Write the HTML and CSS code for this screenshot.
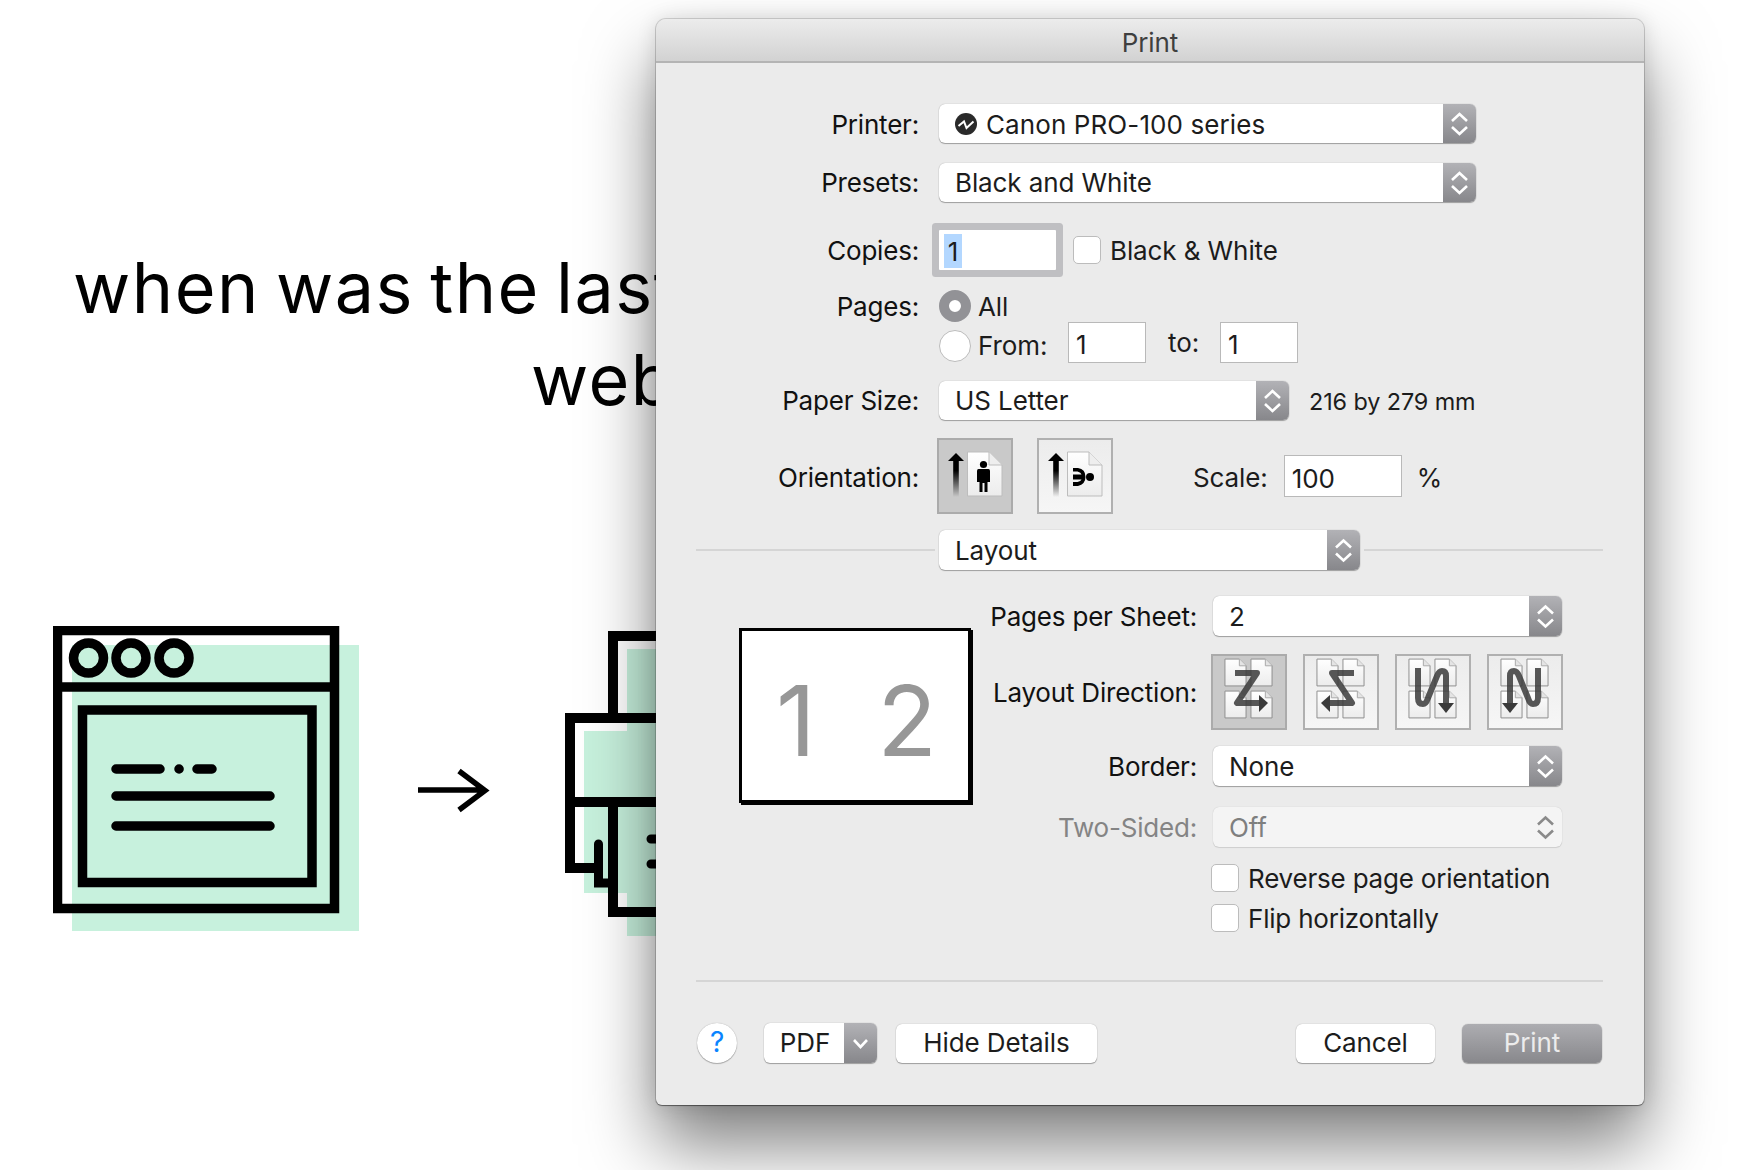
FILE: index.html
```html
<!DOCTYPE html>
<html lang="en">
<head>
    <meta charset="UTF-8">
    <title>Print</title>
    <link rel="stylesheet" href="styles.css">
</head>
<body>

<svg class="defs" width="0" height="0">
    <defs>
        <linearGradient id="pageFill" x1="0" y1="0" x2="0" y2="1">
            <stop offset="0" stop-color="#fff"/>
            <stop offset="1" stop-color="#ececec"/>
        </linearGradient>
        <linearGradient id="tailFade" x1="0" y1="0" x2="0" y2="1">
            <stop offset="0" stop-color="#000"/>
            <stop offset="0.4" stop-color="#000"/>
            <stop offset="1" stop-color="#000" stop-opacity="0"/>
        </linearGradient>
        <symbol id="stepper" viewBox="0 0 33 39">
            <path d="M9 17 L16.5 10 L24 17 M9 23 L16.5 30 L24 23" fill="none" stroke="currentColor" stroke-width="2.6"/>
        </symbol>
        <symbol id="sheet" viewBox="0 0 24 30">
            <path d="M1 1 H16 L23 8 V29 H1 Z" fill="url(#pageFill)" stroke="#8c8c8c" stroke-width="1"/>
            <path d="M16 1 V8 H23" fill="#e4e4e4" stroke="#a8a8a8" stroke-width="1"/>
        </symbol>
        <symbol id="orientPage" viewBox="0 0 76 76">
            <path d="M30.500 14 H52 L65 27 V58 H30.500 Z" fill="url(#pageFill)" stroke="#bdbdbd" stroke-width="1"/>
            <path d="M52 14 V27 H65" fill="#eee" stroke="#bdbdbd" stroke-width="1"/>
            <path d="M11 23 L19 15 L27 23 H21.800 V59 H16.200 V23 Z" fill="url(#tailFade)"/>
        </symbol>
        <symbol id="fourSheets" viewBox="0 0 76 76">
            <use href="#sheet" x="13" y="4" width="23" height="29"/>
            <use href="#sheet" x="39" y="4" width="23" height="29"/>
            <use href="#sheet" x="13" y="36" width="23" height="29"/>
            <use href="#sheet" x="39" y="36" width="23" height="29"/>
        </symbol>
    </defs>
</svg>

<div id="page">
    <h1 class="headline">
        <span class="headline-one">when was the last</span>
        <span class="headline-two">web</span>
    </h1>

    <div class="art">
        <svg class="art-browser" viewBox="53 626 306 305">
            <rect x="72" y="645" width="287" height="286" fill="#c7f1dd"/>
            <g fill="none" stroke="#000" stroke-width="9.5">
                <rect x="57.5" y="630.5" width="277" height="278"/>
                <path d="M53 687 H339"/>
                <rect x="82.5" y="710" width="229.5" height="172.5"/>
                <circle cx="88.5" cy="658" r="15"/>
                <circle cx="131" cy="658" r="15"/>
                <circle cx="174" cy="658" r="15"/>
                <path stroke-linecap="round" d="M116 769 H160 M179 769 h.1 M197 769 H212 M116 796 H270 M116 826 H270"/>
            </g>
        </svg>
        <svg class="art-arrow" viewBox="418 765 72 50">
            <path d="M418 790 H485 M459 771 L485 790.500 L459 810" fill="none" stroke="#000" stroke-width="5.500"/>
        </svg>
        <svg class="art-printer" viewBox="565 631 135 305">
            <rect x="627" y="649" width="73" height="287" fill="#c7f1dd"/>
            <rect x="584" y="731" width="116" height="162" fill="#c7f1dd"/>
            <g fill="none" stroke="#000" stroke-width="10">
                <path d="M613 713 V636 H700"/>
                <path d="M594 868 H570 V718 H700"/>
                <path d="M565 802 H700"/>
                <path d="M613 807 V912 H700"/>
                <path d="M598.500 844 V883 H608" stroke-width="9" stroke-linecap="round"/>
                <path d="M651 839 H662 M651 864 H662" stroke-width="9" stroke-linecap="round"/>
            </g>
        </svg>
    </div>
</div>

<div class="dialog">
    <div class="titlebar">Print</div>

    <div class="row row-printer">
        <span class="label">Printer:</span>
        <div class="select select-wide">
            <svg class="printer-badge" viewBox="0 0 22 22">
                <circle cx="11" cy="11" r="11" fill="#2a2a2a"/>
                <path d="M3.500 13 L9 8.500 L11.500 15 L18.500 8.500" fill="none" stroke="#fff" stroke-width="2"/>
            </svg>
            <span class="select-text select-text-badge">Canon PRO-100 series</span>
            <span class="stepper"><svg><use href="#stepper"/></svg></span>
        </div>
    </div>

    <div class="row row-presets">
        <span class="label">Presets:</span>
        <div class="select select-wide">
            <span class="select-text">Black and White</span>
            <span class="stepper"><svg><use href="#stepper"/></svg></span>
        </div>
    </div>

    <div class="row row-copies">
        <span class="label">Copies:</span>
        <div class="field field-copies"><span class="selected-text">1</span></div>
        <span class="checkbox checkbox-copies"></span>
        <span class="check-text">Black &amp; White</span>
    </div>

    <div class="row row-pages">
        <span class="label">Pages:</span>
        <span class="radio radio-on"></span>
        <span class="radio-text">All</span>
    </div>

    <div class="row row-from">
        <span class="label"></span>
        <span class="radio radio-from"></span>
        <span class="radio-text radio-text-from">From:</span>
        <div class="field field-page">1</div>
        <span class="to-text">to:</span>
        <div class="field field-page">1</div>
    </div>

    <div class="row row-paper">
        <span class="label">Paper Size:</span>
        <div class="select select-paper">
            <span class="select-text">US Letter</span>
            <span class="stepper"><svg><use href="#stepper"/></svg></span>
        </div>
        <span class="paper-dims">216 by 279 mm</span>
    </div>

    <div class="row row-orient">
        <span class="label">Orientation:</span>
        <div class="tile tile-on">
            <svg class="tile-art" viewBox="0 0 76 76">
                <use href="#orientPage" width="76" height="76"/>
                <circle cx="46.500" cy="26.500" r="3.600"/>
                <path d="M41.500 31 H51.500 Q53 31 53 33 V44 H50.500 V54 H47.500 V45 H45.500 V54 H42.500 V44 H40 V33 Q40 31 41.500 31 Z"/>
            </svg>
        </div>
        <div class="tile tile-second">
            <svg class="tile-art" viewBox="0 0 76 76">
                <use href="#orientPage" width="76" height="76"/>
                <circle cx="53" cy="39" r="4"/>
                <path d="M36 30 H41 Q48.500 31 48.500 39 Q48.500 46 41 48 H36 V44 H40.500 Q44 43 44.500 41.500 H36 V36.500 H44.500 Q44 34.500 40.500 33.500 H36 Z"/>
            </svg>
        </div>
        <span class="scale-label">Scale:</span>
        <div class="field field-scale">100</div>
        <span class="percent">%</span>
    </div>

    <div class="row row-section">
        <span class="rule rule-left"></span>
        <div class="select select-section">
            <span class="select-text">Layout</span>
            <span class="stepper"><svg><use href="#stepper"/></svg></span>
        </div>
        <span class="rule"></span>
    </div>

    <div class="layout-panel">
        <div class="preview">
            <span class="preview-num">1</span>
            <span class="preview-num">2</span>
        </div>

        <div class="sub-form">
            <div class="sub-row">
                <span class="sub-label">Pages per Sheet:</span>
                <div class="select select-sub">
                    <span class="select-text">2</span>
                    <span class="stepper"><svg><use href="#stepper"/></svg></span>
                </div>
            </div>

            <div class="sub-row sub-row-direction">
                <span class="sub-label">Layout Direction:</span>
                <div class="tile tile-on tile-dir">
                    <svg class="tile-art" viewBox="0 0 76 76">
                        <use href="#fourSheets" width="76" height="76"/>
                        <path class="flow" d="M24 19 H46 L26 49 H49"/>
                        <path class="flow-head" d="M48 41 L57 49 L48 58 Z"/>
                    </svg>
                </div>
                <div class="tile tile-dir">
                    <svg class="tile-art" viewBox="0 0 76 76">
                        <use href="#fourSheets" width="76" height="76"/>
                        <g transform="translate(75 0) scale(-1 1)">
                            <path class="flow" d="M24 19 H46 L26 49 H49"/>
                            <path class="flow-head" d="M48 41 L57 49 L48 58 Z"/>
                        </g>
                    </svg>
                </div>
                <div class="tile tile-dir">
                    <svg class="tile-art" viewBox="0 0 76 76">
                        <use href="#fourSheets" width="76" height="76"/>
                        <path class="flow" d="M23 14 V44 Q23 50 28 50 Q31 50 33 44 L42 22 Q44 17 47 17 Q51 17 51 22 V50"/>
                        <path class="flow-head" d="M43 49 H59 L51 59 Z"/>
                    </svg>
                </div>
                <div class="tile tile-dir">
                    <svg class="tile-art" viewBox="0 0 76 76">
                        <use href="#fourSheets" width="76" height="76"/>
                        <g transform="translate(74 0) scale(-1 1)">
                            <path class="flow" d="M23 14 V44 Q23 50 28 50 Q31 50 33 44 L42 22 Q44 17 47 17 Q51 17 51 22 V50"/>
                            <path class="flow-head" d="M43 49 H59 L51 59 Z"/>
                        </g>
                    </svg>
                </div>
            </div>

            <div class="sub-row sub-row-border">
                <span class="sub-label">Border:</span>
                <div class="select select-sub">
                    <span class="select-text">None</span>
                    <span class="stepper"><svg><use href="#stepper"/></svg></span>
                </div>
            </div>

            <div class="sub-row sub-row-sided">
                <span class="sub-label sub-label-off">Two-Sided:</span>
                <div class="select select-sub select-off">
                    <span class="select-text">Off</span>
                    <span class="stepper"><svg><use href="#stepper"/></svg></span>
                </div>
            </div>

            <div class="sub-row sub-row-reverse">
                <span class="sub-label"></span>
                <span class="checkbox checkbox-sub"></span>
                <span class="check-text">Reverse page orientation</span>
            </div>

            <div class="sub-row sub-row-flip">
                <span class="sub-label"></span>
                <span class="checkbox checkbox-sub"></span>
                <span class="check-text">Flip horizontally</span>
            </div>
        </div>
    </div>

    <div class="rule rule-bottom"></div>

    <div class="footer">
        <span class="help">?</span>
        <div class="pdf">
            <span class="pdf-text">PDF</span>
            <span class="pdf-arrow">
                <svg viewBox="0 0 33 40"><path d="M10 17 L16.500 24 L23 17" fill="none" stroke="#fff" stroke-width="2.600"/></svg>
            </span>
        </div>
        <span class="btn btn-hide">Hide Details</span>
        <span class="btn btn-cancel">Cancel</span>
        <span class="btn btn-print">Print</span>
    </div>
</div>

</body>
</html>
```

FILE: styles.css
```css
body {
    margin: 0;
    background-color: #fff;
    font-family: Inter, "Liberation Sans", sans-serif;
    color: #1c1c1c;
    overflow: hidden;
}
.defs {
    position: absolute;
}
#page {
    height: 1170px;
}

/* page behind the dialog */
.headline {
    margin: 0;
    padding-top: 242px;
    font-family: Inter, sans-serif;
    font-weight: 400;
    font-size: 70px;
    line-height: 92px;
    letter-spacing: 1.500px;
    word-spacing: -5px;
    color: #000;
}
.headline span {
    display: block;
    white-space: nowrap;
}
.headline-one {
    padding-left: 73px;
}
.headline-two {
    padding-left: 531px;
}
.art {
    display: flex;
    align-items: flex-start;
    padding-left: 53px;
    margin-top: 200px;
}
.art-browser {
    width: 306px;
    height: 305px;
    flex-shrink: 0;
}
.art-arrow {
    width: 72px;
    height: 50px;
    margin: 139px 0 0 59px;
    flex-shrink: 0;
}
.art-printer {
    width: 135px;
    height: 305px;
    margin: 5px 0 0 75px;
    flex-shrink: 0;
}

/* the print window */
.dialog {
    position: absolute;
    left: 656px;
    top: 19px;
    width: 988px;
    padding-bottom: 42px;
    box-sizing: border-box;
    background-color: #ebebeb;
    border-radius: 10px 10px 6px 6px;
    box-shadow: 0 0 0 1px rgba(0, 0, 0, 0.14), 0 1px 1px rgba(0, 0, 0, 0.4), 0 0 20px rgba(0, 0, 0, 0.12), 0 40px 70px rgba(0, 0, 0, 0.5);
    font-size: 26px;
    letter-spacing: -0.100px;
}
.titlebar {
    height: 44px;
    box-sizing: border-box;
    border-bottom: 2px solid #b4b4b4;
    border-radius: 10px 10px 0 0;
    background: linear-gradient(#ececec, #d2d2d2);
    text-align: center;
    line-height: 47px;
    color: #3f3f3f;
}

.row {
    display: flex;
    align-items: center;
}
.label {
    width: 263px;
    margin-right: 20px;
    padding-top: 1px;
    text-align: right;
    letter-spacing: -0.200px;
    color: #111;
    flex-shrink: 0;
}
.row-printer { margin-top: 41px; height: 39px; }
.row-presets { margin-top: 20px; height: 39px; }
.row-presets .label, .row-presets .select-text { padding-top: 0; }
.row-copies { margin-top: 28px; height: 40px; }
.row-pages { margin-top: 20px; height: 32px; }
.row-from { height: 41px; }
.row-paper { margin-top: 17px; height: 40px; }
.row-orient { margin-top: 18px; height: 76px; }
.row-orient .label, .scale-label, .percent { padding-top: 3px; }
.row-orient .label { margin-right: 18px; }
.row-section { margin-top: 16px; height: 40px; padding: 0 41px 0 40px; }

/* popup buttons */
.select {
    display: flex;
    align-items: center;
    height: 39px;
    box-sizing: border-box;
    background-color: #fff;
    border-radius: 6px;
    box-shadow: 0 0 1px rgba(0, 0, 0, 0.35), 0 1px 1px rgba(0, 0, 0, 0.3);
    position: relative;
    overflow: hidden;
}
.select-wide { width: 537px; }
.select-paper { width: 350px; }
.select-section { width: 421px; flex-shrink: 0; margin: 0 4px; height: 40px; }
.select-sub { width: 349px; height: 40px; }
.select-text {
    padding: 1px 0 0 16px;
    flex: 1;
    white-space: nowrap;
}
.printer-badge {
    width: 22px;
    height: 22px;
    margin-left: 16px;
    flex-shrink: 0;
}
.select-text-badge {
    padding-left: 9px;
    letter-spacing: 0.100px;
}
.stepper {
    width: 33px;
    height: 100%;
    flex-shrink: 0;
    color: #fff;
    background: linear-gradient(#b2b2b6, #87878b);
}
.stepper svg {
    display: block;
    width: 33px;
    height: 100%;
}
.select-off {
    background-color: #f4f4f4;
    box-shadow: 0 0 1px rgba(0, 0, 0, 0.2), 0 1px 1px rgba(0, 0, 0, 0.1);
    color: #7f7f7f;
}
.select-off .stepper {
    background: none;
    color: #8a8a8a;
}

/* text fields */
.field {
    height: 41px;
    box-sizing: border-box;
    background-color: #fff;
    border: 1.5px solid #b9b9b9;
    padding-left: 7px;
    line-height: 43px;
    flex-shrink: 0;
}
.field-copies {
    width: 117px;
    height: 40px;
    border: none;
    padding: 4px 0 0 5px;
    line-height: 36px;
    box-shadow: 0 0 0 7px #bfbfc2;
    border-radius: 1px;
}
.selected-text {
    display: inline-block;
    width: 18px;
    height: 34px;
    background-color: #b3d7ff;
    text-align: center;
}
.field-page { width: 78px; }
.field-scale { width: 118px; height: 42px; line-height: 46px; }

.checkbox {
    width: 28px;
    height: 28px;
    box-sizing: border-box;
    background-color: #fff;
    border: 1px solid #bcbcbc;
    border-radius: 5px;
    flex-shrink: 0;
}
.checkbox-copies { margin-left: 17px; }
.check-text {
    margin-left: 9px;
    white-space: nowrap;
}
.radio {
    width: 30px;
    height: 30px;
    background-color: #fff;
    border: 1px solid #bcbcbc;
    border-radius: 50%;
    flex-shrink: 0;
}
.radio-from {
    margin-top: 6px;
}
.radio-on {
    background-color: #fff;
    border: 10px solid #929296;
    width: 12px;
    height: 12px;
}
.radio-text {
    margin-left: 7px;
}
.radio-text-from {
    width: 90px;
    padding-top: 6px;
    white-space: nowrap;
}
.to-text {
    width: 32px;
    margin: 0 20px 0 22px;
    white-space: nowrap;
}
.paper-dims {
    margin-left: 20px;
    font-size: 23.400px;
    padding-top: 2px;
    white-space: nowrap;
}

/* image buttons */
.tile {
    width: 76px;
    height: 76px;
    box-sizing: border-box;
    border: 2.5px solid #b0b0b0;
    background: linear-gradient(#ececec, #f6f6f6);
    flex-shrink: 0;
}
.tile-on {
    background: #c9c9c9;
    border-color: #ababab;
}
.tile-second {
    margin-left: 24px;
}
.tile-art {
    display: block;
    width: 76px;
    height: 76px;
    margin: -2.5px;
}
.scale-label {
    margin: 0 16px 0 80px;
}
.percent {
    margin-left: 15px;
}

.rule {
    flex: 1;
    height: 2px;
    background-color: #d5d5d5;
}
.rule-bottom {
    margin: 48px 41px 0 40px;
}

/* layout pane */
.layout-panel {
    display: flex;
    align-items: flex-start;
    margin-top: 26px;
}
.preview {
    display: flex;
    justify-content: space-between;
    align-items: center;
    width: 232px;
    height: 175px;
    box-sizing: border-box;
    margin: 32px 0 0 83px;
    padding: 10px 31px 0 34px;
    border: 3px solid #000;
    background-color: #fff;
    box-shadow: 2px 2px 0 #000;
    flex-shrink: 0;
}
.preview-num {
    font-size: 98px;
    line-height: 1;
    color: #979797;
}
.sub-form {
    margin-left: 10px;
}
.sub-form .check-text {
    letter-spacing: -0.200px;
}
.sub-row {
    display: flex;
    align-items: center;
    height: 40px;
}
.sub-label {
    width: 216px;
    margin-right: 16px;
    padding-top: 1px;
    text-align: right;
    letter-spacing: -0.200px;
    color: #111;
    white-space: nowrap;
    flex-shrink: 0;
}
.sub-label-off {
    color: #848484;
}
.sub-row-direction {
    height: 76px;
    margin-top: 18px;
}
.sub-row-direction .sub-label {
    margin-right: 14px;
}
.tile-dir {
    margin-right: 16px;
}
.sub-row-border { margin-top: 16px; }
.sub-row-sided { margin-top: 21px; }
.sub-row-reverse { margin-top: 17px; height: 28px; }
.sub-row-flip { margin-top: 12px; height: 28px; }
.checkbox-sub {
    margin-left: -2px;
}
.flow {
    fill: none;
    stroke: #3a3a3a;
    stroke-opacity: 0.85;
    stroke-width: 6;
    stroke-linejoin: round;
}
.flow-head {
    fill: #3a3a3a;
}

/* bottom buttons */
.footer {
    display: flex;
    align-items: center;
    height: 40px;
    margin-top: 41px;
    padding: 0 42px 0 41px;
}
.help {
    width: 40px;
    height: 40px;
    border-radius: 50%;
    background-color: #fff;
    box-shadow: 0 0 1px rgba(0, 0, 0, 0.35), 0 1px 1px rgba(0, 0, 0, 0.25);
    text-align: center;
    line-height: 38px;
    font-size: 28px;
    color: #0a84ff;
    flex-shrink: 0;
}
.pdf {
    display: flex;
    width: 113px;
    height: 40px;
    margin-left: 27px;
    background-color: #fff;
    border-radius: 6px;
    box-shadow: 0 0 1px rgba(0, 0, 0, 0.35), 0 1px 1px rgba(0, 0, 0, 0.3);
    overflow: hidden;
    flex-shrink: 0;
}
.pdf-text {
    width: 80px;
    padding-left: 2px;
    box-sizing: border-box;
    text-align: center;
    line-height: 39px;
}
.pdf-arrow {
    width: 33px;
    background: linear-gradient(#b2b2b6, #87878b);
}
.pdf-arrow svg {
    display: block;
}
.btn {
    height: 39px;
    text-align: center;
    line-height: 37px;
    background-color: #fff;
    border-radius: 6px;
    box-shadow: 0 0 1px rgba(0, 0, 0, 0.35), 0 1px 1px rgba(0, 0, 0, 0.3);
    flex-shrink: 0;
}
.btn-hide {
    width: 201px;
    margin-left: 19px;
}
.btn-cancel {
    width: 139px;
    margin-left: auto;
}
.btn-print {
    width: 140px;
    margin-left: 27px;
    color: #ececec;
    background: linear-gradient(#adadb1, #88888c);
}
```
